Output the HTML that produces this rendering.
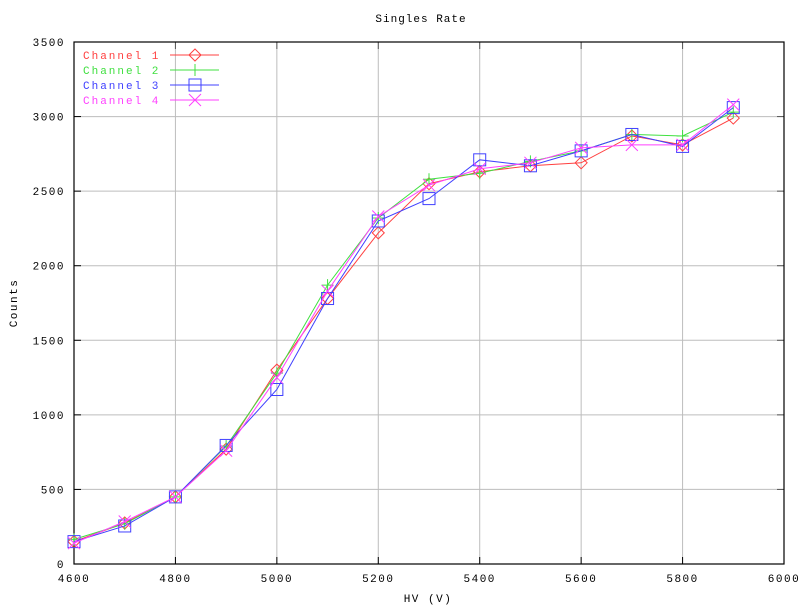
<!DOCTYPE html>
<html><head><meta charset="utf-8"><style>
body{margin:0;background:#fff}
svg{display:block}
text{font-family:"Liberation Mono",monospace;font-size:11px;letter-spacing:1.5px}
.lg{letter-spacing:2px}
</style></head><body>
<svg id="s" width="809" height="607" xmlns="http://www.w3.org/2000/svg"></svg>
<script>
const s=document.getElementById('s');
const L=74,R=784,T=42,B=564;
const X=v=>L+(v-4600)/1400*(R-L), Y=v=>B-v/3500*(B-T);
let h='<rect width="809" height="607" fill="#fff"/>';
h+='<text x="421" y="22" text-anchor="middle" style="letter-spacing:1px">Singles Rate</text>';
h+='<text x="428" y="602" text-anchor="middle">HV (V)</text>';
h+='<text transform="translate(17,303) rotate(-90)" text-anchor="middle">Counts</text>';
for(let v=4800;v<6000;v+=200){h+=`<line x1="${X(v)}" y1="${T}" x2="${X(v)}" y2="${B}" stroke="#bdbdbd"/>`;}
for(let v=500;v<3500;v+=500){h+=`<line x1="${L}" y1="${Y(v)}" x2="${R}" y2="${Y(v)}" stroke="#bdbdbd"/>`;}
for(let v=4600;v<=6000;v+=200){h+=`<text x="${X(v)}" y="582" text-anchor="middle">${v}</text><line x1="${X(v)}" y1="${B}" x2="${X(v)}" y2="${B-7}" stroke="#000"/><line x1="${X(v)}" y1="${T}" x2="${X(v)}" y2="${T+7}" stroke="#555"/>`;}
for(let v=0;v<=3500;v+=500){h+=`<text x="65" y="${Y(v)+4}" text-anchor="end">${v}</text><line x1="${L}" y1="${Y(v)}" x2="${L+7}" y2="${Y(v)}" stroke="#000"/><line x1="${R}" y1="${Y(v)}" x2="${R-7}" y2="${Y(v)}" stroke="#555"/>`;}
h+=`<rect x="${L}" y="${T}" width="${R-L}" height="${B-T}" fill="none" stroke="#000" stroke-width="1.2"/>`;
const xs=[4600,4700,4800,4900,5000,5100,5200,5300,5400,5500,5600,5700,5800,5900];
const data=[
['#ff4040','d',[150,275,450,770,1300,1780,2220,2550,2630,2670,2690,2870,2810,2990]],
['#40e040','p',[165,270,450,790,1280,1870,2320,2580,2620,2700,2770,2880,2870,3030]],
['#4040ff','s',[150,255,450,795,1170,1780,2300,2450,2710,2670,2770,2880,2800,3060]],
['#ff40ff','x',[140,285,450,760,1250,1830,2330,2540,2650,2690,2790,2810,2810,3080]]];
function mk(t,x,y,c){
 if(t=='d')return `<path d="M${x-6} ${y}L${x} ${y-6}L${x+6} ${y}L${x} ${y+6}Z" fill="none" stroke="${c}"/>`;
 if(t=='p')return `<path d="M${x-6} ${y}H${x+6}M${x} ${y-6}V${y+6}" stroke="${c}"/>`;
 if(t=='s')return `<rect x="${x-6}" y="${y-6}" width="12" height="12" fill="none" stroke="${c}"/>`;
 return `<path d="M${x-6} ${y-6}L${x+6} ${y+6}M${x+6} ${y-6}L${x-6} ${y+6}" stroke="${c}"/>`;
}
data.forEach((d,i)=>{
 const [c,t,ys]=d;
 h+=`<polyline fill="none" stroke="${c}" points="${xs.map((x,j)=>X(x)+','+Y(ys[j])).join(' ')}"/>`;
 xs.forEach((x,j)=>h+=mk(t,X(x),Y(ys[j]),c));
 const ly=55+i*15;
 h+=`<text class="lg" x="83" y="${ly+4}" fill="${c}">Channel ${i+1}</text><line x1="170" y1="${ly}" x2="219" y2="${ly}" stroke="${c}"/>`+mk(t,195,ly,c);
});
s.innerHTML=h;
</script>
</body></html>
